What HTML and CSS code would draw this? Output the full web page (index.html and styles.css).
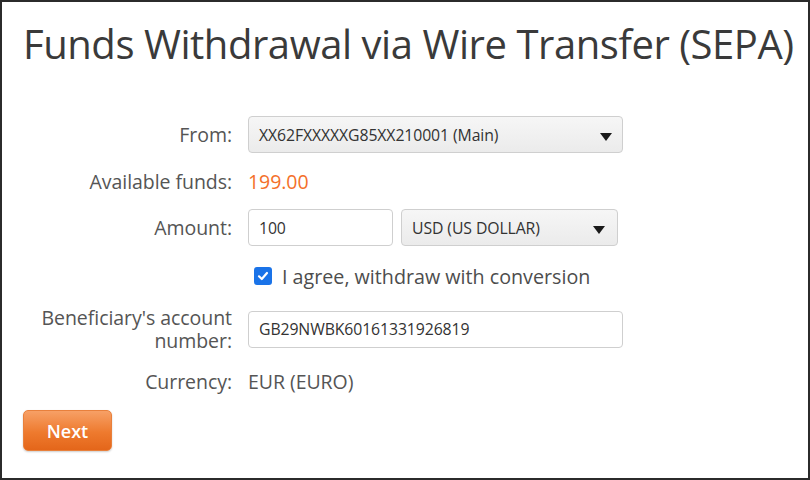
FILE: index.html
```html
<!DOCTYPE html>
<html>
<head>
<meta charset="utf-8">
<link rel="stylesheet" href="styles.css">
</head>
<body>
<div class="frame">
  <h1 class="title">Funds Withdrawal via Wire Transfer (SEPA)</h1>
  <div class="form">
    <div class="label r1">From:</div>
    <div class="ctrl r1"><div class="select wide"><span>XX62FXXXXXG85XX210001 (Main)</span><span class="caret"></span></div></div>

    <div class="label r2">Available funds:</div>
    <div class="ctrl r2 value orange">199.00</div>

    <div class="label r3">Amount:</div>
    <div class="ctrl r3 row">
      <div class="input amount">100</div>
      <div class="select cur"><span>USD (US DOLLAR)</span><span class="caret"></span></div>
    </div>

    <div class="label r4"></div>
    <div class="ctrl r4 check">
      <span class="box"><svg width="12" height="12" viewBox="0 0 12 12"><path d="M2 6.3 L4.8 9 L10 3" fill="none" stroke="#fff" stroke-width="2.2" stroke-linecap="round" stroke-linejoin="round"/></svg></span>
      <span>I agree, withdraw with conversion</span>
    </div>

    <div class="label r5 two">Beneficiary's account number:</div>
    <div class="ctrl r5"><div class="input wide">GB29NWBK60161331926819</div></div>

    <div class="label r6">Currency:</div>
    <div class="ctrl r6 value">EUR (EURO)</div>
  </div>
  <div class="actions"><button class="btn">Next</button></div>
</div>
</body>
</html>
```
FILE: styles.css
```css
html, body { margin: 0; padding: 0; background: #fff; }
.frame {
  width: 810px; height: 480px; box-sizing: border-box;
  border: 2px solid #2b2b2b;
  font-family: "Open Sans", "Liberation Sans", sans-serif;
  color: #555;
  padding: 14px 21px 0;
}
.title {
  margin: 0;
  font-weight: 400; font-size: 40px; line-height: 56px; height: 56px;
  color: #3a3a3a; letter-spacing: -0.45px; white-space: nowrap;
}
.form {
  margin-top: 44px;
  display: grid;
  grid-template-columns: 209px 380px;
  column-gap: 16px;
  align-items: center;
}
.label {
  text-align: right; font-size: 19.5px; line-height: 26px; color: #555;
  letter-spacing: -0.05px;
}
.label.two { width: 200px; justify-self: end; line-height: 23px; }
.value { font-size: 19.5px; line-height: 26px; letter-spacing: -0.05px; }
.r2 { margin-top: 16px; }
.r3 { margin-top: 14px; }
.r4 { margin-top: 19px; height: 22px; }
.r5 { margin-top: 19px; }
.r6 { margin-top: 17px; }
.orange { color: #f4702a; }
.select, .input {
  box-sizing: border-box; height: 37px;
  border: 1px solid #cfcfcf; border-radius: 4px;
  font-size: 15.8px; color: #333; letter-spacing: -0.1px;
  display: flex; align-items: center; padding: 0 10px;
}
.select {
  background: linear-gradient(#f6f6f6, #ebebeb);
  justify-content: space-between;
}
.input { background: #fff; }
.wide { width: 375px; }
.row { display: flex; gap: 8px; }
.amount { width: 145px; }
.cur { width: 217px; padding-right: 12px; }
.caret {
  width: 0; height: 0;
  border-left: 6px solid transparent; border-right: 6px solid transparent;
  border-top: 8px solid #1a1a1a; margin-top: 5px;
}
.check {
  display: flex; align-items: center; gap: 10px; padding-left: 6px;
  font-size: 19.7px; color: #4d4d4d;
}
.box {
  width: 18px; height: 18px; border-radius: 3px; background: #1a73e8;
  display: flex; align-items: center; justify-content: center; flex: none;
}
.actions { margin-top: 15px; }
.btn {
  width: 89px; height: 41px; border-radius: 5px;
  border: 1px solid #e8803c;
  background: linear-gradient(#f7a066, #ee7a2e 55%, #e4661a);
  color: #fff; font-family: "Open Sans", "Liberation Sans", sans-serif;
  font-size: 18px; font-weight: 600; padding: 0;
  box-shadow: 0 1px 2px rgba(0,0,0,0.2);
}
```
